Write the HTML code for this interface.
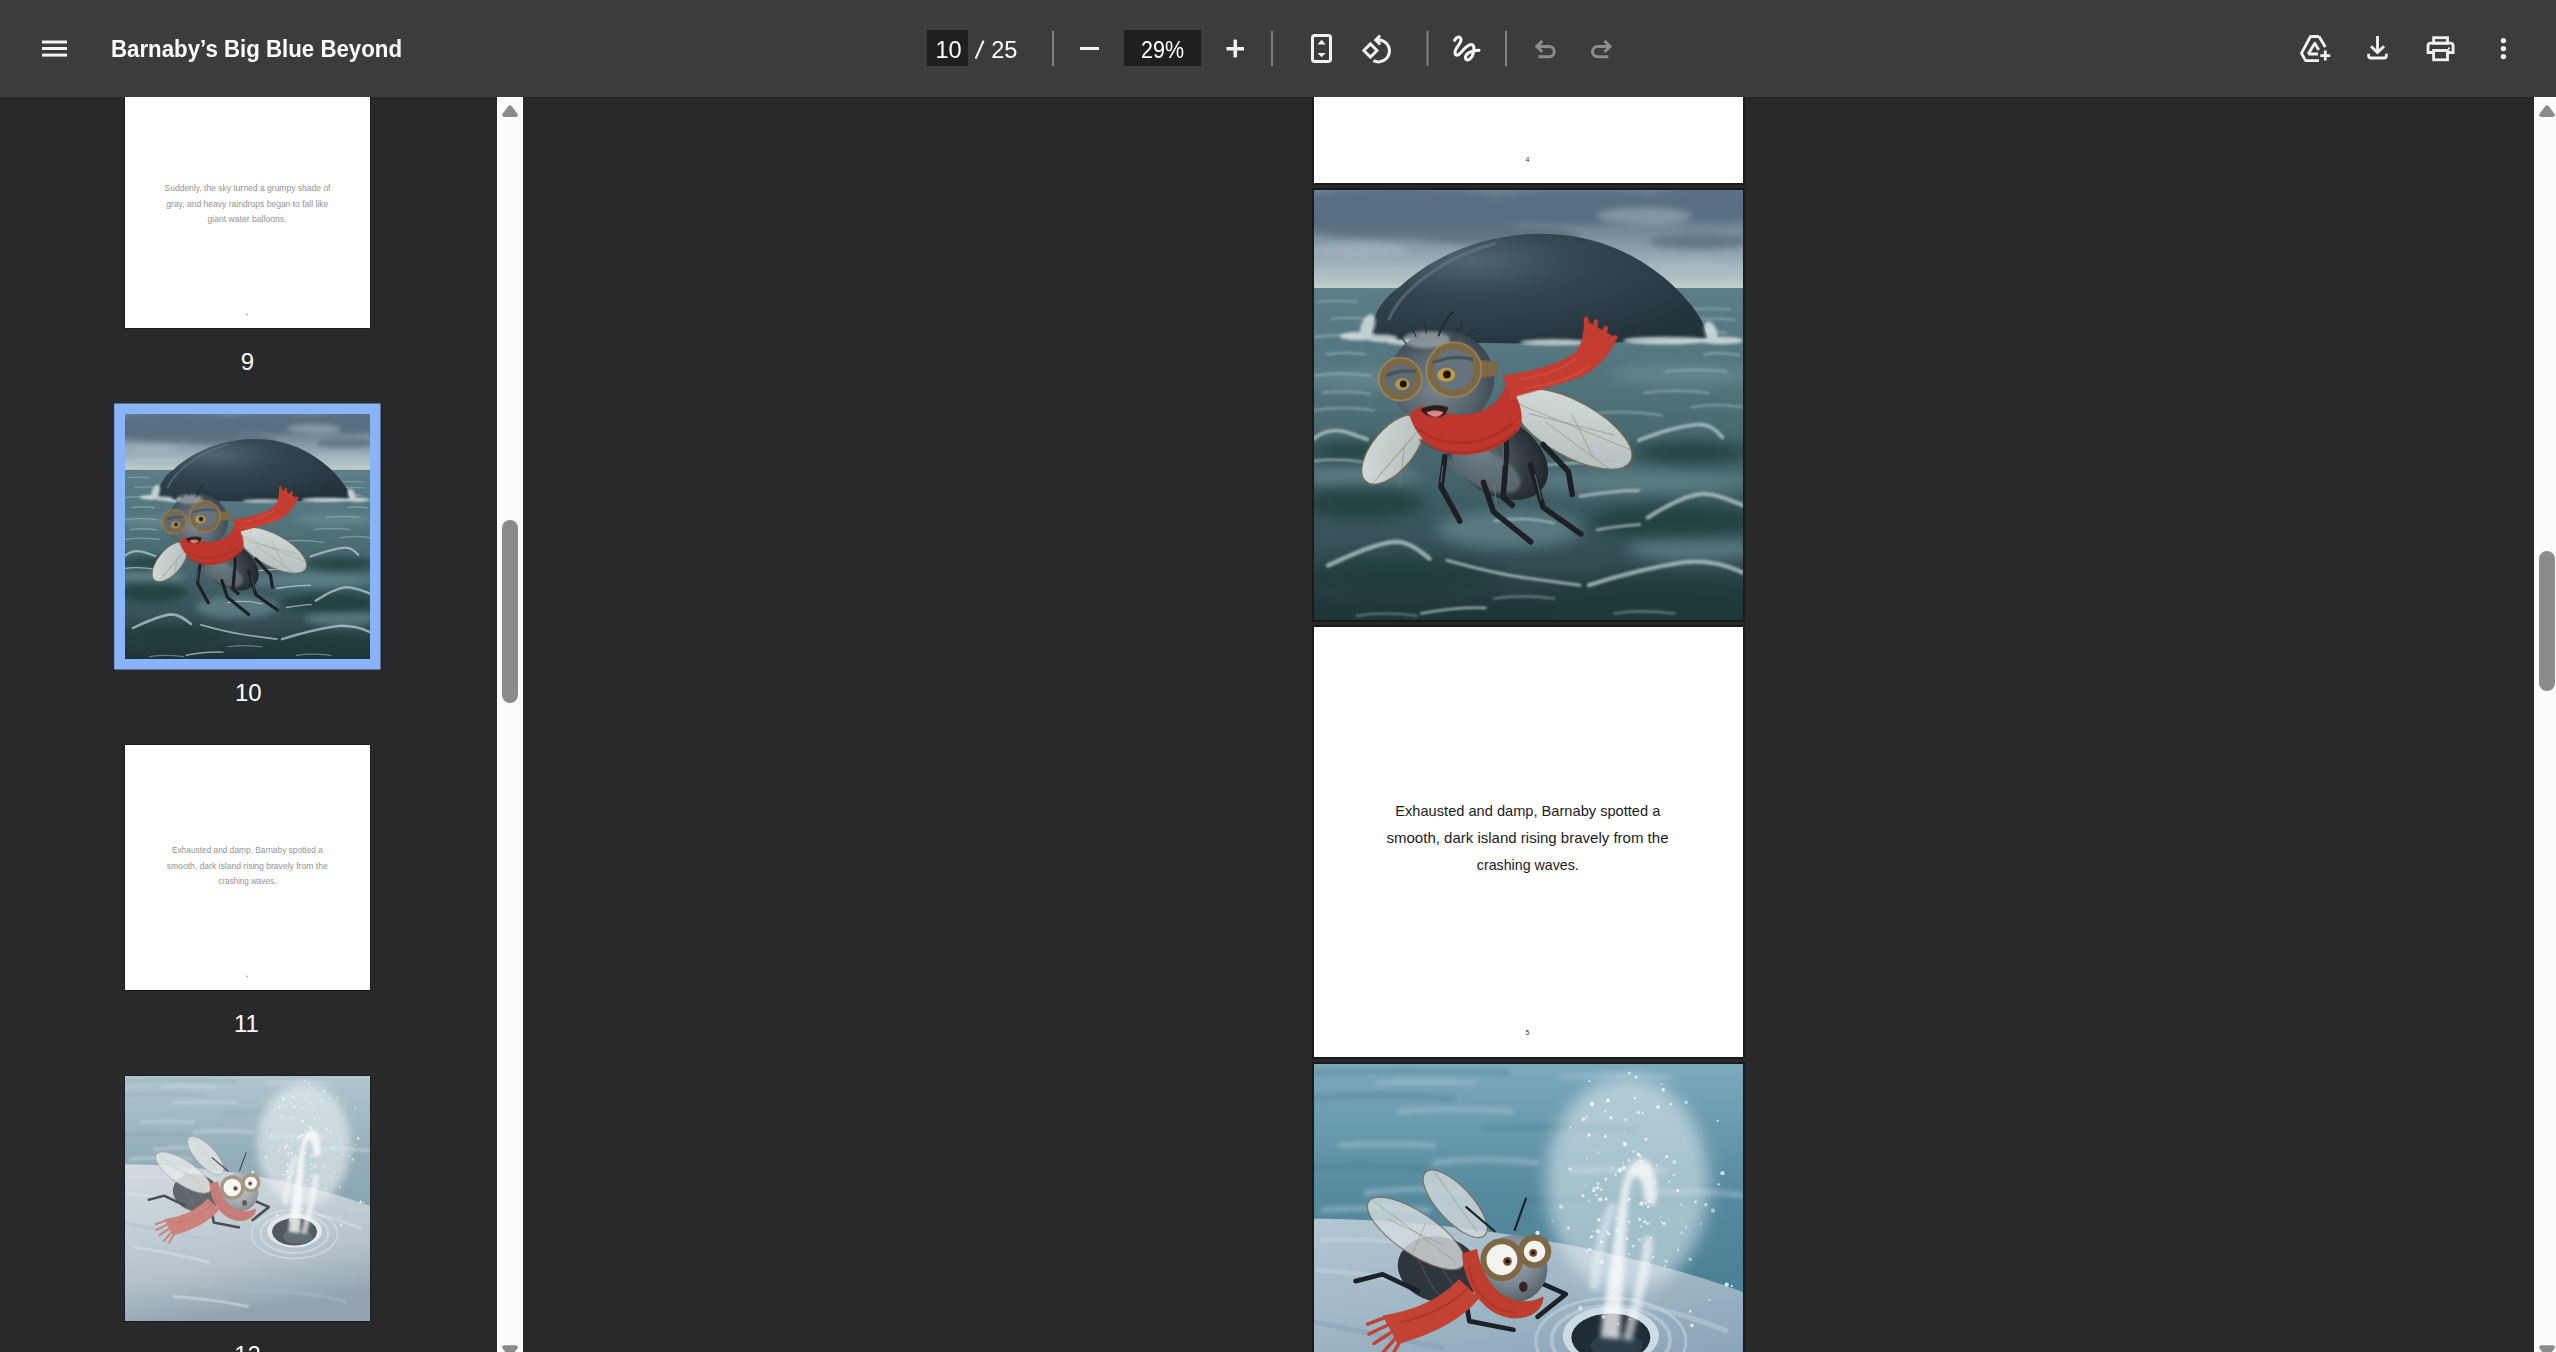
<!DOCTYPE html>
<html><head><meta charset="utf-8">
<style>
html,body{margin:0;padding:0;width:2556px;height:1352px;overflow:hidden;background:#282828;}
svg{display:block;font-family:"Liberation Sans",sans-serif;}
</style></head>
<body>
<svg width="2556" height="1352" viewBox="0 0 2556 1352">
<defs>
<linearGradient id="i1sky" x1="0" y1="0" x2="0" y2="1">
 <stop offset="0" stop-color="#6c8494"/><stop offset="0.3" stop-color="#677f90"/>
 <stop offset="0.55" stop-color="#8599a5"/><stop offset="0.8" stop-color="#a5b8bf"/><stop offset="0.95" stop-color="#bccac6"/><stop offset="1" stop-color="#c3cfc8"/>
</linearGradient>
<linearGradient id="i1sea" x1="0" y1="0" x2="0" y2="1">
 <stop offset="0" stop-color="#6d8f9a"/><stop offset="0.12" stop-color="#62838e"/>
 <stop offset="0.45" stop-color="#52737c"/><stop offset="0.7" stop-color="#415f66"/>
 <stop offset="0.88" stop-color="#304a4f"/><stop offset="1" stop-color="#1e3034"/>
</linearGradient>
<radialGradient id="i1whale" cx="0.3" cy="0.25" r="0.85">
 <stop offset="0" stop-color="#4f6571"/><stop offset="0.35" stop-color="#344852"/><stop offset="1" stop-color="#22323b"/>
</radialGradient>
<radialGradient id="i1head" cx="0.45" cy="0.6" r="0.6">
 <stop offset="0" stop-color="#7b878d"/><stop offset="0.6" stop-color="#57656e"/><stop offset="1" stop-color="#3a4650"/>
</radialGradient>
<radialGradient id="i1body" cx="0.35" cy="0.55" r="0.7">
 <stop offset="0" stop-color="#66757a"/><stop offset="0.5" stop-color="#3b454c"/><stop offset="1" stop-color="#1e2328"/>
</radialGradient>
<linearGradient id="i1wing" x1="0" y1="0" x2="1" y2="1">
 <stop offset="0" stop-color="#e2e8e4"/><stop offset="0.6" stop-color="#c9d2d0"/><stop offset="1" stop-color="#b5bfc0"/>
</linearGradient>
<filter id="i1b8" x="-20%" y="-50%" width="140%" height="200%"><feGaussianBlur stdDeviation="8"/></filter>
<filter id="i1b16" x="-30%" y="-60%" width="160%" height="220%"><feGaussianBlur stdDeviation="16"/></filter>
<filter id="i1b2" x="-5%" y="-20%" width="110%" height="140%"><feGaussianBlur stdDeviation="2"/></filter>
<filter id="i1b4" x="-20%" y="-50%" width="140%" height="200%"><feGaussianBlur stdDeviation="4"/></filter>
<g id="img1">
 <rect width="1000" height="1000" fill="url(#i1sea)"/>
 <rect width="1000" height="228" fill="url(#i1sky)"/>
 <g fill="#4f6578" opacity="0.6" filter="url(#i1b8)">
  <ellipse cx="200" cy="55" rx="300" ry="60"/>
  <ellipse cx="620" cy="40" rx="260" ry="40"/>
  <ellipse cx="930" cy="30" rx="150" ry="45"/>
  <ellipse cx="420" cy="105" rx="200" ry="22"/>
  <ellipse cx="900" cy="120" rx="120" ry="18"/>
 </g>
 <g fill="#a9bcc4" opacity="0.5" filter="url(#i1b8)">
  <ellipse cx="100" cy="140" rx="120" ry="18"/>
  <ellipse cx="770" cy="60" rx="110" ry="20"/>
  <ellipse cx="860" cy="190" rx="180" ry="22"/>
  <ellipse cx="180" cy="200" rx="200" ry="16"/>
 </g>
 <!-- sea texture: dark troughs -->
 <g fill="#6f9098" opacity="0.6" filter="url(#i1b16)">
  <ellipse cx="110" cy="665" rx="140" ry="25"/>
  <ellipse cx="760" cy="678" rx="260" ry="28"/>
  <ellipse cx="455" cy="790" rx="170" ry="45"/>
  <ellipse cx="880" cy="832" rx="150" ry="32"/>
  <ellipse cx="170" cy="440" rx="200" ry="25"/>
  <ellipse cx="860" cy="430" rx="170" ry="25"/>
 </g>
 <g fill="#1f3a37" opacity="0.75" filter="url(#i1b16)">
  <ellipse cx="110" cy="728" rx="150" ry="38"/>
  <ellipse cx="840" cy="770" rx="200" ry="40"/>
  <ellipse cx="200" cy="900" rx="230" ry="45"/>
  <ellipse cx="800" cy="955" rx="260" ry="55"/>
  <rect x="0" y="975" width="1000" height="40"/>
  <ellipse cx="90" cy="608" rx="110" ry="25"/>
  <ellipse cx="880" cy="610" rx="140" ry="28"/>
 </g>
 <g fill="none" stroke="#bccfcf" opacity="0.72" stroke-linecap="round" filter="url(#i1b2)">
  <path stroke-width="9" d="M0,578 C20,562 45,556 70,562 C90,567 105,574 124,580"/>
  <path stroke-width="9" d="M757,582 C800,566 850,548 900,545 C925,546 940,560 952,575"/>
  <path stroke-width="7" d="M620,712 C670,704 720,699 757,699"/>
  <path stroke-width="10" d="M778,762 C815,738 860,712 900,707 C935,705 965,720 1000,733"/>
  <path stroke-width="11" d="M33,873 C80,852 140,822 190,818 C222,818 248,840 269,857"/>
  <path stroke-width="7" d="M310,861 C370,878 440,895 500,903 C550,910 590,915 620,919"/>
  <path stroke-width="10" d="M641,919 C700,900 780,878 860,866 C920,860 960,872 1000,890"/>
  <path stroke-width="6" d="M660,790 C690,785 720,780 760,778"/>
  <path stroke-width="6" d="M250,985 C300,975 350,970 400,972"/>
  <path stroke-width="5" d="M0,630 C40,625 90,628 130,635 M540,640 C600,632 660,632 720,640 M420,770 C470,762 520,765 560,775"/>
 </g>
 <g fill="none" stroke="#9fb5b8" opacity="0.55" stroke-linecap="round" filter="url(#i1b2)">
  <path stroke-width="5" d="M10,260 q40,-5 90,0 M170,270 q40,-5 80,0 M770,258 q50,-5 100,0 M880,278 q40,-5 90,0 M40,300 q40,-5 90,0 M870,302 q50,-6 110,0"/>
  <path stroke-width="6" d="M0,342 q50,-8 110,0 M30,382 q40,-6 90,0 M850,332 q50,-8 110,0 M910,382 q40,-6 80,2 M0,432 q60,-10 130,0 M820,422 q60,-8 140,0 M770,472 q70,-10 150,0"/>
  <path stroke-width="6" d="M0,512 q60,-10 140,0 M640,522 q80,-12 170,2 M880,505 q60,-10 120,0 M20,472 q50,-8 110,2"/>
  <path stroke-width="5" d="M420,950 q60,-10 140,0 M100,990 q60,-10 140,0 M700,985 q60,-10 140,0"/>
 </g>
 <!-- whale -->
 <path d="M133,345 C130,300 160,250 200,225 C260,170 360,110 510,102 C650,96 760,150 840,225 C880,265 910,300 918,345 C700,360 400,362 133,345 Z" fill="url(#i1whale)"/>
 <path d="M175,300 C200,240 290,160 420,125" stroke="#6d7d86" stroke-width="8" fill="none" opacity="0.5" stroke-linecap="round"/>
 <g fill="#dde6e5" opacity="0.8" filter="url(#i1b4)">
  <ellipse cx="125" cy="318" rx="16" ry="30" transform="rotate(20 125 318)"/>
  <ellipse cx="105" cy="340" rx="45" ry="10"/>
  <ellipse cx="160" cy="345" rx="35" ry="9"/>
  <ellipse cx="260" cy="354" rx="90" ry="8"/>
  <ellipse cx="560" cy="354" rx="80" ry="7"/>
  <ellipse cx="820" cy="350" rx="100" ry="9"/>
  <ellipse cx="925" cy="330" rx="14" ry="26" transform="rotate(-20 925 330)"/>
  <ellipse cx="950" cy="350" rx="50" ry="9"/>
 </g>
 <!-- fly: wings -->
 <g stroke="#7b6a4d" stroke-width="3">
  <ellipse cx="602" cy="556" rx="155" ry="64" transform="rotate(29 602 556)" fill="url(#i1wing)" opacity="0.92"/>
  <ellipse cx="184" cy="603" rx="98" ry="48" transform="rotate(-50 184 603)" fill="url(#i1wing)" opacity="0.92"/>
 </g>
 <g stroke="#8a7d62" stroke-width="2" fill="none" opacity="0.6">
  <path d="M470,495 L740,605 M500,520 L700,570 M540,540 L690,650 M600,520 L650,620"/>
  <path d="M255,545 L130,690 M230,575 L155,660 M210,600 L200,690"/>
 </g>
 <!-- body -->
 <ellipse cx="425" cy="618" rx="132" ry="88" transform="rotate(33 425 618)" fill="url(#i1body)"/>
 <ellipse cx="400" cy="652" rx="88" ry="42" transform="rotate(25 400 652)" fill="#788b91" opacity="0.55" filter="url(#i1b4)"/>
 <g stroke="#1c2025" stroke-width="13" fill="none" stroke-linecap="round" stroke-linejoin="round">
  <path d="M305,620 L296,690 L340,770"/>
  <path d="M395,680 L418,748 L505,818"/>
  <path d="M505,640 L534,738 L622,800"/>
  <path d="M534,592 L593,655 L602,708"/>
  <path d="M446,552 L449,608 L441,715 L462,733"/>
 </g>
 <g stroke="#7a868c" stroke-width="3" fill="none" opacity="0.6">
  <path d="M300,640 L296,680 M420,690 L425,730 M515,660 L530,720 M440,580 L442,640"/>
 </g>
 <!-- head -->
 <ellipse cx="298" cy="438" rx="122" ry="112" fill="url(#i1head)"/>
 <ellipse cx="262" cy="348" rx="55" ry="20" fill="#c9d2d2" opacity="0.5" filter="url(#i1b4)"/>
 <path d="M290,340 C298,315 310,297 325,283" stroke="#22272c" stroke-width="4" fill="none"/>
 <g stroke="#2a3035" stroke-width="3" fill="none">
  <path d="M215,358 L198,335 M238,342 L226,318 M262,334 L258,310 M330,332 L345,312 M355,340 L375,325 M378,356 L398,345"/>
 </g>
 <!-- scarf -->
 <path d="M222,522 C255,635 395,645 478,558 C495,528 475,470 448,452 C432,500 382,552 248,503 Z" fill="#bf372c"/>
 <g stroke="#a0281f" stroke-width="5" fill="none" opacity="0.6">
  <path d="M235,550 C290,600 395,605 465,540 M245,580 C300,625 400,625 472,560"/>
 </g>
 <path d="M440,432 C500,422 560,412 610,377 C625,362 628,332 630,302 L706,345 C690,382 660,420 615,437 C560,457 500,472 458,484 Z" fill="#c43d30"/>
 <g stroke="#c43d30" stroke-width="11" stroke-linecap="round">
  <path d="M636,330 L634,300 M654,335 L657,306 M673,342 L680,321 M690,350 L702,343"/>
 </g>
 <g stroke="#e06452" stroke-width="3" fill="none" opacity="0.55">
  <path d="M480,440 C540,430 585,415 612,390 M490,462 C550,452 600,440 640,410"/>
 </g>
 <!-- goggles -->
 <g stroke="#7d6843" stroke-width="17">
  <circle cx="201" cy="440" r="42" fill="#5f6c75"/>
  <circle cx="326" cy="418" r="56" fill="#66737c"/>
 </g>
 <path d="M383,395 L428,400 L428,432 L383,438 Z" fill="#7d6843"/>
 <g stroke="#b89c66" stroke-width="4" fill="none" opacity="0.55">
  <circle cx="201" cy="440" r="50"/><circle cx="326" cy="418" r="64"/>
 </g>
 <path d="M168,432 q30,-15 70,-10" stroke="#46525a" stroke-width="7" fill="none"/>
 <path d="M276,402 q45,-20 95,-8" stroke="#46525a" stroke-width="7" fill="none"/>
 <ellipse cx="206" cy="452" rx="17" ry="14" fill="#b8963f"/>
 <circle cx="208" cy="451" r="8" fill="#141414"/>
 <ellipse cx="308" cy="430" rx="21" ry="16" fill="#c49d45"/>
 <circle cx="310" cy="429" r="9" fill="#141414"/>
 <path d="M248,510 q30,-16 65,-5 q-5,26 -33,24 q-24,-4 -32,-19z" fill="#2e1a1a"/>
 <path d="M262,517 q20,-8 40,0 q-7,11 -20,11 q-14,-2 -20,-11z" fill="#d98a8a"/>
</g>
<linearGradient id="i2sea" x1="0" y1="0" x2="0" y2="1">
 <stop offset="0" stop-color="#7caabb"/><stop offset="0.12" stop-color="#6d9db0"/><stop offset="0.3" stop-color="#568a9e"/><stop offset="0.5" stop-color="#4c8095"/><stop offset="1" stop-color="#45778b"/>
</linearGradient>
<linearGradient id="i2whale" x1="0" y1="0" x2="0.25" y2="1">
 <stop offset="0" stop-color="#b3c6d2"/><stop offset="0.35" stop-color="#a1b8c7"/><stop offset="0.7" stop-color="#8aa4b7"/><stop offset="1" stop-color="#607a8e"/>
</linearGradient>
<radialGradient id="i2head" cx="0.45" cy="0.35" r="0.7">
 <stop offset="0" stop-color="#a3aeb5"/><stop offset="0.6" stop-color="#77848c"/><stop offset="1" stop-color="#4f5a62"/>
</radialGradient>
<filter id="i2blur" x="-30%" y="-30%" width="160%" height="160%"><feGaussianBlur stdDeviation="18"/></filter>
<filter id="i2blur2" x="-30%" y="-30%" width="160%" height="160%"><feGaussianBlur stdDeviation="6"/></filter>
<g id="img2">
 <rect width="1000" height="1000" fill="url(#i2sea)"/>
 <g stroke="#a3c3cf" stroke-width="10" fill="none" opacity="0.7" stroke-linecap="round" filter="url(#i2blur2)">
  <path d="M150,45 q100,-10 220,0 M580,30 q120,-8 250,0 M200,110 q120,-10 260,0 M60,190 q100,-10 220,0"/>
  <path d="M280,230 q110,-15 240,0 M120,300 q100,-15 230,-3 M600,250 q100,-10 220,0 M20,340 q120,-10 250,0 M800,300 q80,-10 200,5"/>
 </g>
 <g stroke="#3f7286" stroke-width="14" fill="none" opacity="0.3" stroke-linecap="round" filter="url(#i2blur2)">
  <path d="M0,80 q150,-15 320,0 M400,150 q150,-10 350,5 M0,240 q120,-10 260,5 M500,320 q150,-15 380,0 M0,20 q200,-10 450,0"/>
 </g>
 <!-- whale -->
 <path d="M0,360 C300,360 700,420 1000,530 L1000,1000 L0,1000 Z" fill="url(#i2whale)"/>
 <g stroke="#c3d4de" stroke-width="12" fill="none" opacity="0.45" stroke-linecap="round">
  <path d="M20,410 q120,-5 240,10 M10,480 q100,5 200,25 M40,700 q150,20 300,60 M200,900 q150,10 300,40 M760,560 q100,20 200,60"/>
 </g>
 <g stroke="#7d9ab0" stroke-width="12" fill="none" opacity="0.4" stroke-linecap="round">
  <path d="M0,600 q150,30 300,60 M0,800 q200,20 400,80 M500,880 q200,-10 400,40 M820,700 q100,0 180,30"/>
 </g>
 <!-- blowhole ripples -->
 <g fill="none" stroke="#c7d6e0" opacity="0.55">
  <ellipse cx="692" cy="645" rx="175" ry="100" stroke-width="7"/>
  <ellipse cx="692" cy="642" rx="138" ry="80" stroke-width="9"/>
 </g>
 <ellipse cx="692" cy="632" rx="112" ry="68" fill="#cddbe4"/>
 <ellipse cx="692" cy="636" rx="92" ry="56" fill="#1f2c36"/>
 <ellipse cx="705" cy="655" rx="60" ry="30" fill="#3c4e5c" opacity="0.5"/>
 <!-- spray -->
 <g filter="url(#i2blur)">
  <ellipse cx="730" cy="280" rx="190" ry="250" fill="#e6eff3" opacity="0.55"/>
 </g>
 <g filter="url(#i2blur2)">
  <path d="M668,635 C675,560 690,480 700,400 C710,330 715,290 730,250 C745,215 775,210 790,240 C800,270 800,300 795,330 L770,320 C770,290 765,265 752,262 C735,262 735,300 730,340 C725,420 722,520 712,640 Z" fill="#ffffff" opacity="0.75"/>
  <path d="M720,640 C740,560 760,480 770,400 L790,405 C785,490 760,570 740,645 Z" fill="#ffffff" opacity="0.6"/>
  <path d="M640,520 C650,450 660,380 690,320 L705,330 C685,390 670,460 662,530 Z" fill="#f2f7f9" opacity="0.5"/>
 </g>
 <g fill="#ffffff">
  <circle cx="707" cy="387" r="5" opacity="0.5"/>
  <circle cx="857" cy="393" r="3" opacity="0.5"/>
  <circle cx="799" cy="236" r="2" opacity="0.8"/>
  <circle cx="664" cy="362" r="4" opacity="0.8"/>
  <circle cx="867" cy="380" r="2.5" opacity="0.5"/>
  <circle cx="637" cy="220" r="2.5" opacity="0.5"/>
  <circle cx="680" cy="268" r="3.5" opacity="0.6"/>
  <circle cx="597" cy="244" r="4" opacity="0.6"/>
  <circle cx="849" cy="433" r="2.5" opacity="0.7"/>
  <circle cx="877" cy="454" r="4" opacity="0.5"/>
  <circle cx="641" cy="165" r="4" opacity="0.8"/>
  <circle cx="756" cy="112" r="3.5" opacity="0.7"/>
  <circle cx="675" cy="588" r="5" opacity="0.6"/>
  <circle cx="816" cy="371" r="3.5" opacity="0.7"/>
  <circle cx="723" cy="161" r="2" opacity="0.5"/>
  <circle cx="669" cy="292" r="3" opacity="0.6"/>
  <circle cx="840" cy="228" r="5" opacity="0.5"/>
  <circle cx="748" cy="79" r="3" opacity="0.7"/>
  <circle cx="685" cy="85" r="4" opacity="0.8"/>
  <circle cx="779" cy="332" r="3" opacity="0.8"/>
  <circle cx="722" cy="241" r="5" opacity="0.7"/>
  <circle cx="774" cy="175" r="3.5" opacity="0.7"/>
  <circle cx="856" cy="327" r="2.5" opacity="0.5"/>
  <circle cx="658" cy="305" r="3" opacity="0.6"/>
  <circle cx="727" cy="129" r="3.5" opacity="0.5"/>
  <circle cx="791" cy="449" r="3" opacity="0.6"/>
  <circle cx="715" cy="473" r="3" opacity="0.8"/>
  <circle cx="796" cy="274" r="2.5" opacity="0.6"/>
  <circle cx="744" cy="423" r="3.5" opacity="0.6"/>
  <circle cx="734" cy="315" r="3.5" opacity="0.7"/>
  <circle cx="661" cy="205" r="2.5" opacity="0.5"/>
  <circle cx="521" cy="393" r="5" opacity="0.8"/>
  <circle cx="647" cy="402" r="3.5" opacity="0.8"/>
  <circle cx="773" cy="324" r="2.5" opacity="0.8"/>
  <circle cx="788" cy="432" r="2" opacity="0.5"/>
  <circle cx="798" cy="300" r="2" opacity="0.7"/>
  <circle cx="703" cy="257" r="2.5" opacity="0.8"/>
  <circle cx="785" cy="404" r="3" opacity="0.7"/>
  <circle cx="681" cy="314" r="3.5" opacity="0.8"/>
  <circle cx="641" cy="318" r="2.5" opacity="0.5"/>
  <circle cx="735" cy="21" r="3.5" opacity="0.6"/>
  <circle cx="661" cy="288" r="4" opacity="0.7"/>
  <circle cx="818" cy="469" r="2" opacity="0.7"/>
  <circle cx="952" cy="254" r="5" opacity="0.7"/>
  <circle cx="687" cy="395" r="4" opacity="0.7"/>
  <circle cx="636" cy="123" r="2.5" opacity="0.6"/>
  <circle cx="810" cy="46" r="2.5" opacity="0.6"/>
  <circle cx="633" cy="282" r="2" opacity="0.5"/>
  <circle cx="766" cy="114" r="2.5" opacity="0.7"/>
  <circle cx="684" cy="390" r="2.5" opacity="0.8"/>
  <circle cx="759" cy="409" r="4" opacity="0.5"/>
  <circle cx="576" cy="332" r="5" opacity="0.5"/>
  <circle cx="763" cy="226" r="3.5" opacity="0.6"/>
  <circle cx="667" cy="315" r="5" opacity="0.7"/>
  <circle cx="962" cy="513" r="5" opacity="0.8"/>
  <circle cx="558" cy="364" r="2" opacity="0.6"/>
  <circle cx="763" cy="378" r="2.5" opacity="0.8"/>
  <circle cx="756" cy="210" r="4" opacity="0.8"/>
  <circle cx="679" cy="168" r="4" opacity="0.6"/>
  <circle cx="930" cy="341" r="5" opacity="0.5"/>
  <circle cx="531" cy="439" r="2.5" opacity="0.5"/>
  <circle cx="734" cy="442" r="2.5" opacity="0.7"/>
  <circle cx="728" cy="477" r="2.5" opacity="0.5"/>
  <circle cx="822" cy="215" r="3.5" opacity="0.8"/>
  <circle cx="778" cy="371" r="4" opacity="0.5"/>
  <circle cx="868" cy="89" r="4" opacity="0.5"/>
  <circle cx="745" cy="204" r="2.5" opacity="0.8"/>
  <circle cx="694" cy="241" r="2" opacity="0.7"/>
  <circle cx="679" cy="110" r="3.5" opacity="0.5"/>
  <circle cx="763" cy="261" r="2.5" opacity="0.7"/>
  <circle cx="783" cy="320" r="3.5" opacity="0.5"/>
  <circle cx="593" cy="382" r="4" opacity="0.6"/>
  <circle cx="692" cy="125" r="4" opacity="0.8"/>
  <circle cx="652" cy="294" r="4" opacity="0.7"/>
  <circle cx="941" cy="132" r="2.5" opacity="0.8"/>
  <circle cx="771" cy="366" r="3.5" opacity="0.7"/>
  <circle cx="808" cy="356" r="2" opacity="0.6"/>
  <circle cx="642" cy="40" r="2.5" opacity="0.7"/>
  <circle cx="877" cy="575" r="3.5" opacity="0.6"/>
  <circle cx="734" cy="224" r="3.5" opacity="0.6"/>
  <circle cx="943" cy="280" r="2.5" opacity="0.8"/>
  <circle cx="847" cy="294" r="3.5" opacity="0.6"/>
  <circle cx="705" cy="359" r="3" opacity="0.5"/>
  <circle cx="671" cy="460" r="5" opacity="0.5"/>
  <circle cx="636" cy="436" r="3" opacity="0.5"/>
  <circle cx="922" cy="548" r="2.5" opacity="0.5"/>
  <circle cx="811" cy="368" r="2.5" opacity="0.7"/>
  <circle cx="832" cy="93" r="3" opacity="0.8"/>
  <circle cx="881" cy="608" r="4" opacity="0.8"/>
  <circle cx="720" cy="230" r="2" opacity="0.6"/>
  <circle cx="697" cy="330" r="2" opacity="0.5"/>
  <circle cx="750" cy="233" r="2.5" opacity="0.5"/>
  <circle cx="730" cy="386" r="2" opacity="0.7"/>
  <circle cx="849" cy="294" r="3" opacity="0.6"/>
  <circle cx="902" cy="372" r="2" opacity="0.6"/>
  <circle cx="730" cy="407" r="3" opacity="0.7"/>
  <circle cx="662" cy="278" r="3.5" opacity="0.6"/>
  <circle cx="709" cy="604" r="3" opacity="0.5"/>
  <circle cx="913" cy="327" r="4" opacity="0.6"/>
  <circle cx="653" cy="289" r="3.5" opacity="0.5"/>
  <circle cx="648" cy="93" r="5" opacity="0.8"/>
  <circle cx="828" cy="273" r="2.5" opacity="0.6"/>
  <circle cx="621" cy="568" r="5" opacity="0.6"/>
  <circle cx="651" cy="389" r="2" opacity="0.6"/>
  <circle cx="889" cy="321" r="3" opacity="0.8"/>
  <circle cx="759" cy="361" r="3.5" opacity="0.7"/>
  <circle cx="598" cy="148" r="2" opacity="0.8"/>
  <circle cx="769" cy="424" r="2" opacity="0.7"/>
  <circle cx="670" cy="414" r="4" opacity="0.7"/>
  <circle cx="697" cy="449" r="2" opacity="0.7"/>
  <circle cx="643" cy="431" r="4" opacity="0.6"/>
  <circle cx="737" cy="594" r="2" opacity="0.7"/>
  <circle cx="760" cy="214" r="4" opacity="0.5"/>
  <circle cx="662" cy="389" r="5" opacity="0.6"/>
  <circle cx="974" cy="516" r="2.5" opacity="0.8"/>
  <circle cx="751" cy="30" r="3.5" opacity="0.6"/>
  <circle cx="702" cy="531" r="2.5" opacity="0.5"/>
  <circle cx="814" cy="60" r="4" opacity="0.8"/>
  <circle cx="821" cy="459" r="4" opacity="0.5"/>
  <circle cx="802" cy="100" r="5" opacity="0.6"/>
  <circle cx="763" cy="325" r="5" opacity="0.7"/>
  <circle cx="839" cy="258" r="3.5" opacity="0.5"/>
  <circle cx="628" cy="128" r="5" opacity="0.6"/>
  <circle cx="726" cy="301" r="2" opacity="0.5"/>
  <circle cx="713" cy="247" r="5" opacity="0.8"/>
  <circle cx="734" cy="367" r="3" opacity="0.6"/>
  <circle cx="725" cy="186" r="5" opacity="0.8"/>
  <circle cx="627" cy="306" r="3.5" opacity="0.7"/>
 </g>
 <!-- fly -->
 <g stroke="#7c6e58" stroke-width="3">
  <ellipse cx="329" cy="325" rx="101" ry="40" transform="rotate(47 329 325)" fill="#cdd6da" opacity="0.85"/>
 </g>
 <ellipse cx="292" cy="478" rx="98" ry="76" transform="rotate(15 292 478)" fill="#2d353d"/>
 <g stroke="#6a5a44" stroke-width="3" fill="none" opacity="0.6"><path d="M230,420 C250,470 270,520 300,545 M270,410 C290,460 310,505 340,530"/></g>
 <g stroke="#7c6e58" stroke-width="3">
  <ellipse cx="238" cy="394" rx="133" ry="48" transform="rotate(34 238 394)" fill="#d3dbde" opacity="0.82"/>
 </g>
 <g stroke="#8a7a62" stroke-width="2" fill="none" opacity="0.5"><path d="M140,320 L330,460 M170,360 L300,420 M260,370 L230,440 M280,250 L380,390"/></g>
 <g stroke="#1d2126" stroke-width="11" fill="none" stroke-linecap="round" stroke-linejoin="round">
  <path d="M97,505 L160,489 L243,528"/>
  <path d="M355,555 L362,598 L465,618"/>
  <path d="M528,509 L587,535 L521,588"/>
 </g>
 <circle cx="466" cy="476" r="78" fill="url(#i2head)"/>
 <path d="M421,389 L355,333 M468,386 L494,313" stroke="#1d2126" stroke-width="5" fill="none" stroke-linecap="round"/>
 <!-- scarf -->
 <path d="M345,440 C350,520 400,590 470,592 C510,590 535,570 535,540 C500,560 450,555 420,520 C395,490 385,460 380,430 Z" fill="#bd3d2e"/>
 <path d="M338,500 C300,540 250,570 160,585 L195,652 C270,630 340,600 385,545 Z" fill="#c24233"/>
 <g stroke="#c24233" stroke-width="8" stroke-linecap="round">
  <path d="M165,590 L125,605 M170,608 L128,628 M178,625 L140,650 M188,640 L160,672 M198,650 L180,680"/>
 </g>
 <g stroke="#a32e22" stroke-width="4" fill="none" opacity="0.6"><path d="M360,470 C370,530 410,575 470,578 M200,600 C260,590 320,560 360,520"/></g>
 <!-- goggles -->
 <g stroke="#7f6845" stroke-width="14">
  <circle cx="438" cy="455" r="43" fill="#f2f2ee"/>
  <circle cx="514" cy="436" r="32" fill="#f2f2ee"/>
 </g>
 <circle cx="451" cy="459" r="10" fill="#7a4528"/><circle cx="451" cy="459" r="5" fill="#111"/>
 <circle cx="511" cy="439" r="9" fill="#7a4528"/><circle cx="511" cy="439" r="4" fill="#111"/>
 <ellipse cx="488" cy="518" rx="10" ry="12" fill="#3a2222"/>
</g>

</defs>
<!-- backgrounds -->
<rect x="0" y="0" width="2556" height="1352" fill="#282828"/>
<rect x="0" y="96" width="497" height="1256" fill="#28292b"/>

<!-- main pages -->
<g id="pages">
<rect x="1312" y="-249" width="433" height="434" fill="#1a1a1a"/>
<rect x="1314" y="-247" width="429" height="430" fill="#fff"/>
<text x="1527.5" y="162" font-size="7" text-anchor="middle" fill="#333">4</text>
<rect x="1312" y="188" width="433" height="434" fill="#1a1a1a"/>
<svg x="1314" y="190" width="429" height="430" viewBox="0 0 1000 1000" preserveAspectRatio="none"><use href="#img1"/></svg>
<rect x="1312" y="625" width="433" height="434" fill="#1a1a1a"/>
<rect x="1314" y="627" width="429" height="430" fill="#fff"/>
<g fill="#1b1b1b" font-size="15" text-anchor="middle">
<text x="1527.8" y="816" textLength="265" lengthAdjust="spacingAndGlyphs">Exhausted and damp, Barnaby spotted a</text>
<text x="1527.5" y="843" textLength="282" lengthAdjust="spacingAndGlyphs">smooth, dark island rising bravely from the</text>
<text x="1527.8" y="870" textLength="102" lengthAdjust="spacingAndGlyphs">crashing waves.</text>
</g>
<text x="1527.5" y="1035" font-size="7" text-anchor="middle" fill="#333">5</text>
<rect x="1312" y="1062" width="433" height="434" fill="#1a1a1a"/>
<svg x="1314" y="1064" width="429" height="430" viewBox="0 0 1000 1000" preserveAspectRatio="none"><use href="#img2"/></svg>
</g>

<!-- thumbnails -->
<g id="thumbs">
<rect x="124" y="82" width="247" height="247" fill="#1c1d1f"/>
<rect x="125" y="83" width="245" height="245" fill="#fff"/>
<g fill="#939393" font-size="8.6" text-anchor="middle">
<text x="247.5" y="191" textLength="166" lengthAdjust="spacingAndGlyphs">Suddenly, the sky turned a grumpy shade of</text>
<text x="247.3" y="207" textLength="162" lengthAdjust="spacingAndGlyphs">gray, and heavy raindrops began to fall like</text>
<text x="247" y="222" textLength="79" lengthAdjust="spacingAndGlyphs">giant water balloons.</text>
</g>
<circle cx="247" cy="314.5" r="0.9" fill="#aaa"/>
<text x="247.5" y="369.8" font-size="24" text-anchor="middle" fill="#fff">9</text>

<rect x="114.2" y="403.5" width="266.3" height="266" fill="#8ab4f8"/>
<svg x="125" y="414" width="245" height="245" viewBox="0 0 1000 1000" preserveAspectRatio="none"><use href="#img1"/></svg>
<text x="248.3" y="700.5" font-size="24" text-anchor="middle" fill="#fff">10</text>

<rect x="124" y="744" width="247" height="247" fill="#1c1d1f"/>
<rect x="125" y="745" width="245" height="245" fill="#fff"/>
<g fill="#939393" font-size="8.6" text-anchor="middle">
<text x="247.4" y="853" textLength="151" lengthAdjust="spacingAndGlyphs">Exhausted and damp, Barnaby spotted a</text>
<text x="247.2" y="869" textLength="161" lengthAdjust="spacingAndGlyphs">smooth, dark island rising bravely from the</text>
<text x="247.2" y="884" textLength="58" lengthAdjust="spacingAndGlyphs">crashing waves.</text>
</g>
<circle cx="247" cy="976.5" r="0.9" fill="#aaa"/>
<text x="246.5" y="1032.3" font-size="24" text-anchor="middle" fill="#fff">11</text>

<rect x="124" y="1075" width="247" height="247" fill="#1c1d1f"/>
<svg x="125" y="1076" width="245" height="245" viewBox="0 0 1000 1000" preserveAspectRatio="none"><filter id="fade12" x="0" y="0" width="1000" height="1000" filterUnits="userSpaceOnUse"><feColorMatrix type="saturate" values="0.7"/><feComponentTransfer><feFuncR type="gamma" amplitude="1" exponent="0.6" offset="0"/><feFuncG type="gamma" amplitude="1" exponent="0.6" offset="0"/><feFuncB type="gamma" amplitude="1" exponent="0.6" offset="0"/></feComponentTransfer></filter><g filter="url(#fade12)"><use href="#img2"/></g></svg>
<text x="247.5" y="1362.5" font-size="24" text-anchor="middle" fill="#fff">12</text>
</g>

<!-- scrollbars -->
<g id="scroll">
<rect x="497" y="97" width="26" height="1255" fill="#fcfcfc"/>
<rect x="2534" y="97" width="22" height="1255" fill="#fcfcfc"/>
<g fill="#8b8b8b">
<rect x="502" y="520" width="16" height="183" rx="8"/>
<rect x="2539" y="551" width="16" height="140" rx="8"/>
<path d="M510,107.3 L515.8,115 L504.2,115 Z" stroke="#8b8b8b" stroke-width="4" stroke-linejoin="round"/>
<path d="M510,1355 L515.8,1347.3 L504.2,1347.3 Z" stroke="#8b8b8b" stroke-width="4" stroke-linejoin="round"/>
<path d="M2547,107.3 L2552.8,115 L2541.2,115 Z" stroke="#8b8b8b" stroke-width="4" stroke-linejoin="round"/>
<path d="M2547,1355 L2552.8,1347.3 L2541.2,1347.3 Z" stroke="#8b8b8b" stroke-width="4" stroke-linejoin="round"/>
</g>
</g>

<!-- toolbar -->
<g id="toolbar">
<rect x="0" y="0" width="2556" height="97" fill="#3c3c3c"/>
<g fill="#f2f2f2">
<rect x="42" y="40.5" width="25" height="3"/>
<rect x="42" y="47" width="25" height="3"/>
<rect x="42" y="53.6" width="25" height="3"/>
</g>
<text x="111" y="57" font-size="23.5" font-weight="bold" fill="#fff" textLength="291" lengthAdjust="spacingAndGlyphs">Barnaby’s Big Blue Beyond</text>

<rect x="927" y="30" width="41" height="36" fill="#1f1f1f"/>
<text x="948.5" y="58" font-size="23.6" text-anchor="middle" fill="#fff">10</text>
<path d="M975.6,58.6 L983.6,40.6" stroke="#fff" stroke-width="2"/>
<text x="1004.3" y="58" font-size="23.6" text-anchor="middle" fill="#fff">25</text>
<rect x="1052" y="31" width="2" height="35" fill="#808080"/>
<rect x="1080" y="47" width="19" height="3" fill="#f2f2f2"/>
<rect x="1124" y="30" width="77" height="36" fill="#1f1f1f"/>
<text x="1162.5" y="58" font-size="23.6" text-anchor="middle" fill="#fff" textLength="43" lengthAdjust="spacingAndGlyphs">29%</text>
<rect x="1226.5" y="47" width="17.5" height="3.5" fill="#f2f2f2"/>
<rect x="1233.5" y="39.6" width="3.5" height="17.8" fill="#f2f2f2"/>
<rect x="1271" y="31" width="2" height="35" fill="#808080"/>
<rect x="1426.5" y="31" width="2" height="35" fill="#808080"/>
<rect x="1505" y="31" width="2" height="35" fill="#808080"/>
</g>
<g id="icons" fill="none" stroke="#f2f2f2" stroke-width="3">
 <!-- fit page -->
 <rect x="1312.5" y="35.5" width="18" height="26" rx="2.2"/>
 <path d="M1317.5,44.4 L1321.6,39.7 L1325.7,44.4 Z M1317.5,52.9 L1321.6,57.3 L1325.7,52.9 Z" fill="#f2f2f2" stroke="none"/>
 <!-- rotate -->
 <path d="M1370.4,43.9 L1377,50.5 L1370.4,57.1 L1363.8,50.5 Z" stroke-width="2.9"/>
 <path d="M1379.4,39.9 A11,11 0 1 1 1373.3,60.6" stroke-width="3"/>
 <path d="M1380.2,35.4 L1375.6,39.9 L1380.2,44.4" stroke-width="2.8"/><path d="M1376,39.9 L1380.5,39.9" stroke-width="3"/>
 <!-- annotate squiggle -->
 <path d="M1454.6,40.3 C1456,37 1460,35.5 1461,39.5 C1461.5,43 1455,48 1455,52.5 C1455,56 1458,56 1461,52.5 C1464,49 1468,44 1471.5,44.5 C1475,45 1474.5,52 1472,56.5 C1470,60 1466,61.5 1465.5,58 C1465,54 1470,51 1479,50.3" stroke="#ffffff" stroke-width="3" stroke-linecap="round" stroke-linejoin="round"/>
 <!-- undo / redo -->
 <g stroke="#8c8c8c" stroke-width="3">
  <path d="M1538.5,56.7 L1549.2,56.7 A5.1,5.1 0 0 0 1549.2,46.5 L1537,46.5"/>
  <path d="M1542.3,40.9 L1536.8,46.5 L1542.3,52"/>
  <path d="M1608.3,56.7 L1597.6,56.7 A5.1,5.1 0 0 1 1597.6,46.5 L1609.8,46.5"/>
  <path d="M1604.5,40.9 L1610,46.5 L1604.5,52"/>
 </g>
 <!-- drive add -->
 <path d="M2319,36.5 L2310.5,36.5 L2301.5,53.2 L2305.6,60.6 L2319,60.6" stroke-width="2.8" stroke-linejoin="round"/>
 <path d="M2319,36.5 L2325.3,47" stroke-width="2.8"/>
 <path d="M2308.2,54 L2314.8,43.3 L2318.8,50 M2308.2,54 L2318,54" stroke-width="2.8" stroke-linejoin="round"/>
 <path d="M2320.3,55.6 L2330.3,55.6 M2325.3,50.6 L2325.3,60.6" stroke-width="2.8"/>
 <!-- download -->
 <path d="M2377.5,36 L2377.5,52" stroke-width="2.8"/>
 <path d="M2371,46.2 L2377.5,52.6 L2384,46.2" stroke-width="2.8"/>
 <path d="M2368.6,53.8 L2368.6,55.8 Q2368.6,58 2371,58 L2384,58 Q2386.4,58 2386.4,55.8 L2386.4,53.8" stroke-width="2.8"/>
 <!-- print -->
 <rect x="2433.6" y="37.7" width="13.9" height="5.5" stroke-width="2.8"/>
 <path d="M2433.5,52.5 L2428,52.5 L2428,46 Q2428,43.2 2430.8,43.2 L2450.3,43.2 Q2453.1,43.2 2453.1,46 L2453.1,52.5 L2447.5,52.5" stroke-width="2.8"/>
 <rect x="2433.6" y="50.5" width="13.9" height="9.3" stroke-width="2.8" fill="#3c3c3c"/>
 <circle cx="2449" cy="48.3" r="1.1" fill="#f2f2f2" stroke="none"/>
 <!-- more -->
 <g fill="#f2f2f2" stroke="none">
  <circle cx="2503.4" cy="40.6" r="2.7"/><circle cx="2503.4" cy="48.6" r="2.7"/><circle cx="2503.4" cy="56.6" r="2.7"/>
 </g>
</g>
<!--/icons-->
</svg>
</body></html>
